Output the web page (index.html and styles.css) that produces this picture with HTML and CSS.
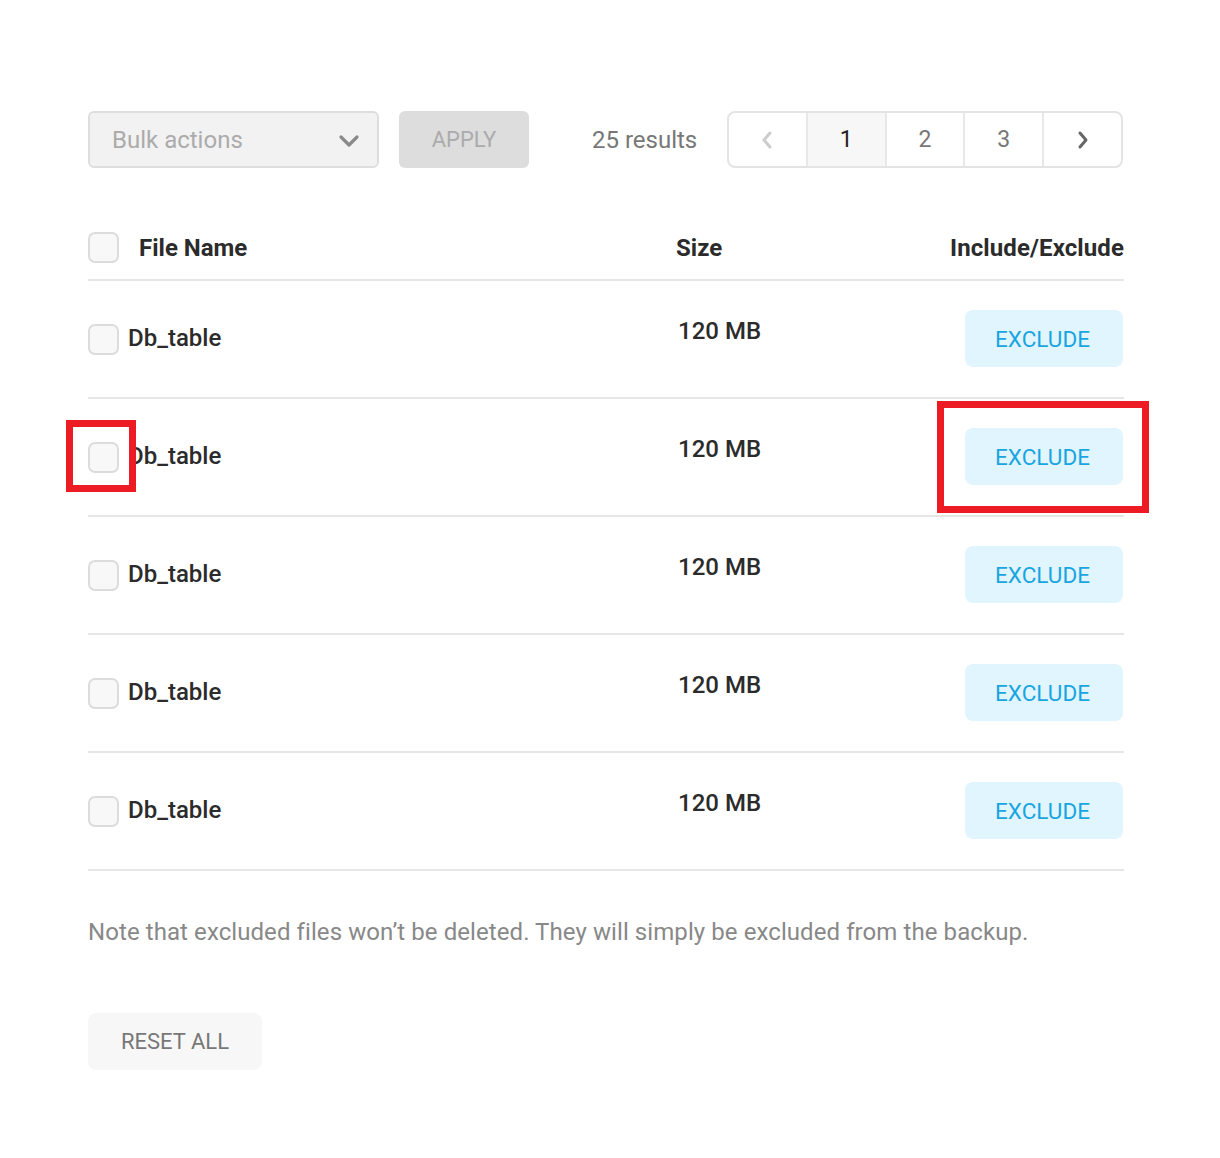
FILE: index.html
```html
<!DOCTYPE html>
<html>
<head>
<meta charset="utf-8">
<link rel="stylesheet" href="styles.css">
</head>
<body>
<div class="page">
  <div class="toolbar">
    <div class="select">
      <span>Bulk actions</span>
      <svg class="chev" width="22" height="14" viewBox="0 0 22 14"><polyline points="3,3 11,11 19,3" fill="none" stroke="#8a8a8a" stroke-width="3.2" stroke-linecap="round" stroke-linejoin="round"/></svg>
    </div>
    <button class="apply">APPLY</button>
    <span class="results">25 results</span>
    <div class="pager">
      <div class="cell"><svg width="14" height="22" viewBox="0 0 14 22"><polyline points="10,4 4,11 10,18" fill="none" stroke="#cccccc" stroke-width="3" stroke-linecap="round" stroke-linejoin="round"/></svg></div>
      <div class="cell active">1</div>
      <div class="cell">2</div>
      <div class="cell">3</div>
      <div class="cell"><svg width="14" height="22" viewBox="0 0 14 22"><polyline points="4,4 10,11 4,18" fill="none" stroke="#666666" stroke-width="3" stroke-linecap="round" stroke-linejoin="round"/></svg></div>
    </div>
  </div>

  <div class="table">
    <div class="row head">
      <span class="cb"></span>
      <span class="name hname">File Name</span>
      <span class="size hsize">Size</span>
      <span class="act">Include/Exclude</span>
    </div>
    <div class="row">
      <span class="cb"></span>
      <span class="name">Db_table</span>
      <span class="size">120 MB</span>
      <span class="act"><button class="exclude">EXCLUDE</button></span>
    </div>
    <div class="row">
      <span class="cb"></span>
      <span class="name">Db_table</span>
      <span class="size">120 MB</span>
      <span class="act"><button class="exclude">EXCLUDE</button></span>
    </div>
    <div class="row">
      <span class="cb"></span>
      <span class="name">Db_table</span>
      <span class="size">120 MB</span>
      <span class="act"><button class="exclude">EXCLUDE</button></span>
    </div>
    <div class="row">
      <span class="cb"></span>
      <span class="name">Db_table</span>
      <span class="size">120 MB</span>
      <span class="act"><button class="exclude">EXCLUDE</button></span>
    </div>
    <div class="row">
      <span class="cb"></span>
      <span class="name">Db_table</span>
      <span class="size">120 MB</span>
      <span class="act"><button class="exclude">EXCLUDE</button></span>
    </div>
  </div>

  <p class="note">Note that excluded files won’t be deleted. They will simply be excluded from the backup.</p>
  <button class="reset">RESET ALL</button>

  <div class="mark mark-cb"></div>
  <div class="mark mark-btn"></div>
</div>
</body>
</html>
```
FILE: styles.css
```css
* { box-sizing: border-box; }
html, body { margin: 0; padding: 0; background: #fff; }
body { font-family: Roboto, "Liberation Sans", sans-serif; color: #333; }

.page {
  position: relative;
  width: 1036px;
  margin: 0 0 0 88px;
  padding-top: 111px;
  height: 1158px;
}

.toolbar {
  display: flex;
  align-items: center;
  height: 57px;
}
.select {
  width: 291px;
  height: 57px;
  border: 2px solid #dedede;
  background: #f2f2f2;
  border-radius: 6px;
  display: flex;
  align-items: center;
  justify-content: space-between;
  padding: 0 17px 0 22px;
  font-size: 24px;
  color: #ababab;
}
.chev { margin-top: 2px; }
.apply {
  margin-left: 20px;
  width: 130px;
  height: 57px;
  border: none;
  border-radius: 6px;
  background: #dddddd;
  color: #ababab;
  font-family: inherit;
  font-size: 22px;
  padding: 0;
}
.results {
  margin-left: 63px;
  font-size: 24px;
  color: #777;
}
.pager {
  margin-left: auto;
  display: flex;
  height: 57px;
  width: 396px;
  margin-right: 1px;
  border: 2px solid #e4e4e4;
  border-radius: 8px;
  overflow: hidden;
}
.cell {
  flex: 1;
  display: flex;
  align-items: center;
  justify-content: center;
  font-size: 23px;
  color: #777;
  border-left: 2px solid #e8e8e8;
}
.cell:first-child { border-left: none; }
.cell.active { background: #f7f7f7; color: #222; }

.table { margin-top: 48px; }
.row {
  display: grid;
  grid-template-columns: 40px 548px 1fr auto;
  align-items: center;
  height: 118px;
  border-bottom: 2px solid #e6e6e6;
}
.row.head { height: 65px; }
.cb {
  width: 31px;
  height: 31px;
  border: 2px solid #dcdcdc;
  background: #f8f8f8;
  border-radius: 7px;
}
.name {
  font-size: 24px;
  font-weight: 500;
  color: #2b2b2b;
  margin-top: -3px;
}
.hname { margin-left: 11px; font-weight: 700; }
.size {
  font-size: 24px;
  font-weight: 500;
  color: #2b2b2b;
  align-self: start;
  padding-top: 36px;
  padding-left: 2px;
}
.hsize { align-self: center; padding-top: 0; padding-left: 0; font-weight: 700; }
.act {
  justify-self: end;
  font-size: 24px;
  font-weight: 700;
  color: #2b2b2b;
  letter-spacing: 0.1px;
}
.head .name, .head .size, .head .act { margin-top: 0; }
.exclude {
  display: block;
  width: 158px;
  height: 57px;
  border: none;
  border-radius: 8px;
  background: #e1f5fe;
  color: #19a5e1;
  font-family: inherit;
  font-size: 22.5px;
  padding: 0 3px 0 0;
  margin-top: -1px;
  margin-right: 1px;
}

.note {
  margin: 46px 0 0 0;
  font-size: 24px;
  color: #888;
  line-height: 30px;
  letter-spacing: 0.08px;
}
.reset {
  display: block;
  margin-top: 66px;
  width: 174px;
  height: 57px;
  border: none;
  border-radius: 8px;
  background: #f7f7f7;
  color: #777;
  font-family: inherit;
  font-size: 22px;
  padding: 0;
}

.mark {
  position: absolute;
  border: 7px solid #ed1c24;
}
.mark-cb { left: -22px; top: 420px; width: 70px; height: 72px; }
.mark-btn { left: 849px; top: 401px; width: 212px; height: 112px; }
```
